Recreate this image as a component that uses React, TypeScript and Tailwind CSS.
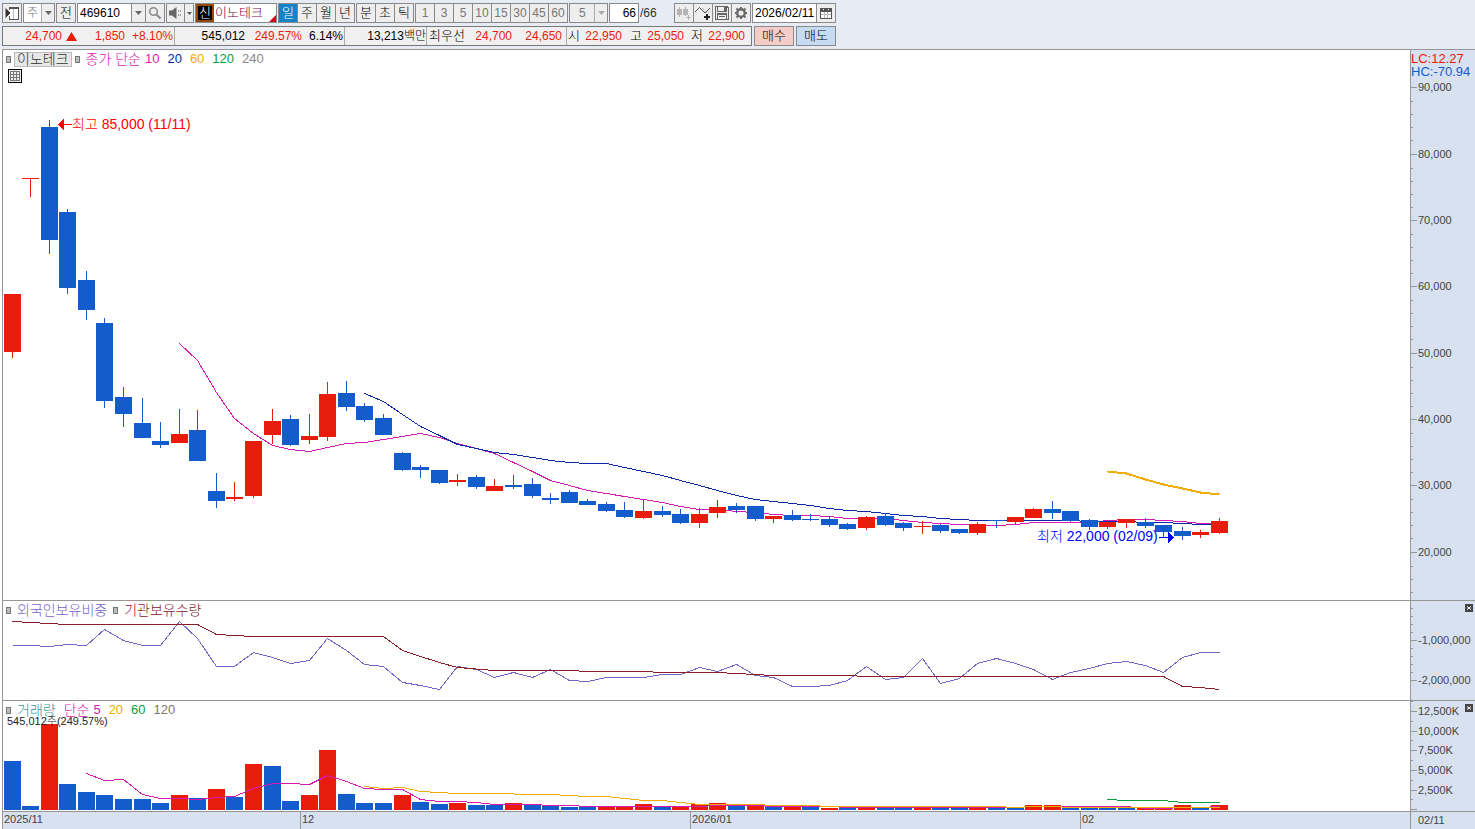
import React, { useState } from "react";

type Point = [number, number]; // [bar index, y]
type Candle = [boolean, number, number, number, number]; // [up, high, top, bottom, low]

const RED = "#e81c0a";
const BLUE = "#125ccb";

// x position of every daily bar
const barX = (i: number) => Math.floor(1 + 18.575 * i);
const centerX = (i: number) => barX(i) + 8;

// Joins a list of consecutive values, the first one is at bar "from"
const series = (from: number, values: number[]): Point[] => values.map((y, i) => [from + i, y]);

const velas: Candle[] = [
  [true, 294, 294, 352, 358],
  [true, 178, 178, 179, 197],
  [false, 120, 127, 240, 254],
  [false, 209, 212, 288, 294],
  [false, 271, 280, 310, 320],
  [false, 318, 323, 401, 408],
  [false, 387, 397, 414, 427],
  [false, 398, 423, 438, 438],
  [false, 422, 441, 445, 448],
  [true, 409, 434, 443, 443],
  [false, 410, 430, 461, 461],
  [false, 473, 491, 501, 508],
  [true, 482, 497, 499, 501],
  [true, 441, 441, 496, 498],
  [true, 409, 421, 435, 444],
  [false, 415, 419, 445, 446],
  [true, 414, 436, 440, 444],
  [true, 382, 394, 437, 441],
  [false, 381, 393, 407, 411],
  [false, 403, 406, 420, 422],
  [false, 414, 418, 435, 435],
  [false, 452, 453, 470, 471],
  [false, 465, 467, 470, 478],
  [false, 470, 470, 483, 484],
  [true, 474, 480, 482, 486],
  [false, 475, 477, 487, 489],
  [true, 479, 486, 491, 491],
  [false, 475, 485, 487, 489],
  [false, 478, 484, 496, 498],
  [false, 493, 498, 500, 504],
  [false, 490, 492, 503, 503],
  [false, 499, 501, 505, 505],
  [false, 502, 504, 511, 512],
  [false, 502, 510, 517, 518],
  [true, 500, 511, 518, 519],
  [false, 506, 511, 515, 517],
  [false, 509, 514, 523, 524],
  [true, 508, 514, 523, 528],
  [true, 500, 507, 513, 518],
  [false, 503, 506, 510, 513],
  [false, 506, 506, 519, 521],
  [true, 516, 516, 519, 523],
  [false, 510, 515, 520, 521],
  [false, 514, 519, 520, 521],
  [false, 516, 519, 525, 527],
  [false, 523, 524, 529, 530],
  [true, 516, 517, 528, 530],
  [false, 513, 516, 525, 526],
  [false, 522, 523, 528, 531],
  [true, 521, 526, 527, 534],
  [false, 524, 525, 531, 533],
  [false, 529, 529, 533, 534],
  [true, 522, 524, 533, 535],
  [false, 520, 520, 521, 528],
  [true, 517, 517, 522, 524],
  [true, 508, 509, 518, 518],
  [false, 501, 509, 513, 519],
  [false, 511, 511, 521, 522],
  [false, 519, 520, 527, 530],
  [true, 520, 522, 527, 529],
  [true, 519, 519, 523, 528],
  [false, 518, 522, 526, 528],
  [false, 525, 525, 532, 537],
  [false, 527, 531, 536, 540],
  [true, 530, 532, 535, 538],
  [true, 518, 521, 533, 534],
];

const ma10 = series(9, [
  343, 360, 392, 418, 433, 445, 449, 451, 447, 443, 442, 439, 436, 433, 437, 443, 448, 453, 462, 471, 480, 485, 490,
  493, 496, 499, 502, 506, 509, 509, 511, 512, 514, 515, 515, 516, 518, 518, 518, 520, 522, 523, 524, 525, 525, 524,
  522, 522, 522, 522, 520, 519, 519, 520, 521, 523, 523,
]);
const ma20 = series(19, [
  393, 401, 414, 426, 435, 444, 448, 452, 454, 457, 460, 462, 463, 463, 467, 471, 475, 480, 485, 490, 495, 499, 501,
  503, 505, 508, 510, 511, 513, 515, 516, 518, 519, 520, 520, 520, 520, 520, 520, 521, 521, 521, 522, 522, 523, 524,
  524,
]);
const ma60 = series(59, [471, 473, 479, 484, 488, 492, 494]);

const foreign = series(0, [
  645, 645, 646, 644, 645, 629, 640, 645, 645, 621, 638, 666, 666, 652, 657, 663, 660, 638, 650, 664, 666, 682, 685,
  689, 666, 669, 677, 672, 677, 669, 680, 681, 677, 677, 677, 674, 674, 667, 671, 664, 675, 677, 686, 686, 685, 680,
  666, 679, 677, 658, 683, 678, 663, 658, 663, 669, 679, 672, 668, 663, 661, 665, 672, 657, 652, 652,
]);
const institution: Point[] = [
  [0, 621], [3, 624], [10, 624], [11, 634], [13, 636], [20, 636], [21, 650], [22, 656], [23, 662], [24, 667],
  [26, 670], [30, 670], [31, 671], [34, 671], [35, 672], [38, 672], [41, 675], [45, 675], [46, 676], [62, 676],
  [63, 686], [64, 687], [65, 689],
];

// Top of every volume bar, the sign says if it is blue (negative) or red
const volumes = [
  -761, -806, 724, -784, -792, -795, -799, -799, -803, 795, -798, 789, -797, 764, -766, -801, 795, 750, -794, -803,
  -803, 795, -802, -804, 803, -805, -805, 803, -804, -806, -807, -807, 806, 806, 804, -807, 806, 804, 803, -805, 805,
  -807, 806, -807, 808, -808, 808, -808, -808, 808, -808, -808, 808, -808, -808, 805, 805, -808, -808, -808, -808,
  808, 808, 805, -808, 805,
];
const vol5 = series(4, [
  773, 780, 779, 794, 798, 798, 799, 797, 796, 788, 783, 783, 784, 775, 781, 788, 789, 789, 799, 801, 801, 802, 804,
  804, 804, 805, 805, 806, 806, 806, 806, 806, 806, 806, 805, 805, 805, 806, 806, 806, 806, 807, 807, 807, 807, 807,
  807, 807, 807, 807, 807, 806, 806, 806, 806, 806, 806, 808, 808, 807, 807, 806,
]);
const vol20: Point[] = [
  [19, 786], [20, 788], [21, 787], [22, 791], [24, 793], [26, 793], [28, 794], [29, 794], [31, 796], [32, 796],
  [34, 800], [35, 800], [37, 804], [40, 804], [41, 805], [43, 805], [44, 806], [53, 806], [54, 807], [55, 806],
  [56, 806], [57, 807], [65, 807],
];
const vol60 = series(59, [799, 800, 800, 800, 802, 802, 802]);

const Line: React.FC<{ points: Point[]; color: string; width?: number }> = ({ points, color, width = 1 }) => (
  <polyline
    points={points.map(([i, y]) => `${centerX(i) + 0.5},${y + 0.5}`).join(" ")}
    fill="none"
    stroke={color}
    strokeWidth={width}
  />
);

interface AxisProps {
  top: number;
  labels: [string, number][];
  minor: number[];
}

const Axis: React.FC<AxisProps> = ({ top, labels, minor }) => (
  <svg className="block h-full w-full text-[11px]" shapeRendering="crispEdges">
    <g transform={`translate(0 ${-top})`}>
      {minor.map((y) => (
        <rect key={y} x="0" y={y} width="2" height="1" fill="#969696" />
      ))}
      {labels.map(([text, y]) => (
        <g key={text}>
          <rect x="0" y={y} width="6" height="1" fill="#969696" />
          <text x="7" y={y + 4} fill="#444">
            {text}
          </text>
        </g>
      ))}
    </g>
  </svg>
);

const priceLabels: [string, number][] = [
  ["90,000", 87],
  ["80,000", 154],
  ["70,000", 220],
  ["60,000", 286],
  ["50,000", 353],
  ["40,000", 419],
  ["30,000", 485],
  ["20,000", 552],
];
const priceMinor = priceLabels.flatMap(([, y]) => [14, 27, 40, 53].map((d) => y + d)).filter((y) => y < 599);

const CloseButton: React.FC<{ label: string }> = ({ label }) => (
  <button aria-label={label} className="absolute top-[3px] right-[2px] h-2 w-2 bg-[#444]">
    <svg viewBox="0 0 8 8" className="block h-2 w-2">
      <path d="M2 2.5l4 3M6 2.5l-4 3" stroke="#fff" strokeWidth="1" />
    </svg>
  </button>
);

const Marker = () => <span className="h-[7px] w-[5px] border border-[#777] bg-[#bbb]" />;

const Arrow: React.FC<{ color?: string }> = ({ color = "#666" }) => (
  <svg viewBox="0 0 7 4" className="h-1 w-[7px]">
    <path d="M0 0h7L3.5 4z" fill={color} />
  </svg>
);

const boxed = "h-5 border border-[#8a8a8a] flex items-center justify-center";

interface DropdownProps {
  label: string;
  value: string;
  className: string;
  disabled?: boolean;
}

const Dropdown: React.FC<DropdownProps> = ({ label, value, className, disabled }) => (
  <div className={`relative ${className}`}>
    <select
      aria-label={label}
      disabled={disabled}
      defaultValue={value}
      className={`h-5 w-full appearance-none border border-[#8a8a8a] text-[#777] ${
        disabled ? "bg-[#eee] pl-[9px]" : "bg-white pl-[3px]"
      }`}
    >
      <option>{value}</option>
    </select>
    <span className="pointer-events-none absolute top-px right-px flex h-[18px] w-[13px] items-center justify-center border-l border-[#aaa] bg-[#eee]">
      <Arrow color={disabled ? "#aaa" : "#666"} />
    </span>
  </div>
);

interface ButtonGroupProps {
  items: string[];
  active?: string;
  muted?: boolean;
  onSelect?: (item: string) => void;
}

const ButtonGroup: React.FC<ButtonGroupProps> = ({ items, active, muted, onSelect }) => (
  <div className="flex pl-px">
    {items.map((item) => (
      <button
        key={item}
        onClick={() => onSelect?.(item)}
        className={`-ml-px w-5 ${boxed} ${
          item === active ? "bg-[#1583c7] text-white" : muted ? "bg-[#eee] text-[#777]" : "bg-[#eee] text-black"
        } ${muted ? "text-[12px]" : "text-[13px]"}`}
      >
        {item}
      </button>
    ))}
  </div>
);

const Toolbar = () => {
  const [period, setPeriod] = useState("일");

  return (
    <div className="flex gap-px">
      <button aria-label="메뉴" className={`w-5 bg-[#eee] ${boxed}`}>
        <svg viewBox="0 0 16 16" className="h-4 w-4" fill="none" shapeRendering="crispEdges">
          <path d="M5 2h10v13H5z" fill="#fff" />
          <path d="M5.500 5V2.500h9v12h-9V11" stroke="#555" />
          <path d="M5 2h10v2H5z" fill="#555" />
          <path d="M9.500 4v10" stroke="#bbb" />
          <path d="M2 4v8l5-4z" fill="#333" />
          <path d="M1.500 3v10" stroke="#999" />
        </svg>
      </button>
      <Dropdown label="시장" value="주" className="w-8" />
      <button className={`w-5 bg-[#eee] text-[13px] ${boxed}`}>전</button>
      <div className="flex">
        <input
          aria-label="종목코드"
          defaultValue="469610"
          className="h-5 w-[55px] border border-[#8a8a8a] bg-white pl-[2px]"
        />
        <button aria-label="종목 목록" className={`-ml-px w-[15px] bg-[#eee] ${boxed}`}>
          <Arrow />
        </button>
        <button aria-label="검색" className={`-ml-px w-5 bg-[#eee] ${boxed}`}>
          <svg viewBox="0 0 14 14" className="h-[14px] w-[14px]" fill="none" stroke="#888">
            <circle cx="5.500" cy="5.500" r="3.800" strokeWidth="1.500" />
            <path d="M8.500 8.500l4 4" strokeWidth="2" />
          </svg>
        </button>
      </div>
      <div className="flex">
        <button aria-label="소리" className={`w-[19px] bg-[#eee] ${boxed}`}>
          <svg viewBox="0 0 14 12" className="h-3 w-[14px]" fill="#666">
            <path d="M0 3.500h3L7.500 0v12L3 8.500H0z" />
            <path d="M9 3h1v2H9zM9 7h1v2H9zM11 3h1v2h-1zM11 7h1v2h-1z" fill="#999" />
          </svg>
        </button>
        <button aria-label="소리 설정" className={`-ml-px w-[10px] bg-[#eee] ${boxed}`}>
          <svg viewBox="0 0 5 3" className="h-[3px] w-[5px]">
            <path d="M0 0h5L2.500 3z" fill="#555" />
          </svg>
        </button>
      </div>
      <div className="flex h-5 w-[82px] border border-[#8a8a8a] bg-white text-[13px]">
        <span className="flex w-[18px] items-center justify-center border-2 border-[#96480a] bg-black text-white">신</span>
        <span className="relative flex flex-1 items-center pl-px text-[#7a0045]">
          이노테크
          <svg viewBox="0 0 7 7" className="absolute right-0 bottom-0 h-[7px] w-[7px]">
            <path d="M7 0v7H0z" fill="#d8001c" />
          </svg>
        </span>
      </div>
      <ButtonGroup items={["일", "주", "월", "년"]} active={period} onSelect={setPeriod} />
      <ButtonGroup items={["분", "초", "틱"]} />
      <ButtonGroup items={["1", "3", "5", "10", "15", "30", "45", "60"]} muted />
      <Dropdown label="분 간격" value="5" className="w-[39px]" disabled />
      <input
        aria-label="조회 개수"
        defaultValue="66"
        className="h-5 w-[30px] border border-[#8a8a8a] bg-white pr-[2px] text-right"
      />
      <span className="flex w-[33px] items-center text-[#333]">/66</span>
      <div className="flex pl-px">
        <button aria-label="차트 추가" className={`-ml-px w-5 bg-[#eee] ${boxed}`}>
          <svg viewBox="0 0 16 16" className="h-4 w-4" fill="#b4b4b4" shapeRendering="crispEdges">
            <path d="M1 4h5v6H1zM3 2h1v10H3zM7 4h5v6H7zM9 2h1v9H9zM10 12h5v1h-5zM12 10h1v5h-1z" />
          </svg>
        </button>
        <button aria-label="지표 추가" className={`-ml-px w-5 bg-[#eee] ${boxed}`}>
          <svg viewBox="0 0 16 16" className="h-4 w-4" fill="none">
            <path d="M0 7l4.500-4.500 5.500 5.500 5-5" stroke="#555" />
            <path d="M7 3l4 4 4 0" stroke="#999" strokeDasharray="1 1" />
            <path d="M9 12h6M12 9v6" stroke="#222" strokeWidth="2" />
          </svg>
        </button>
        <button aria-label="저장" className={`-ml-px w-5 bg-[#eee] ${boxed}`}>
          <svg viewBox="0 0 16 16" className="h-4 w-4" fill="none" shapeRendering="crispEdges">
            <path d="M1 1h12l2 2v12H1z" fill="#666" />
            <path d="M2 2h1v12H2zM13 3h1v11h-1zM4 2h6v4H4zM3 7h10v1H3zM4 10h8v4H4z" fill="#eee" />
            <path d="M5 11.500h6" stroke="#666" />
          </svg>
        </button>
        <button aria-label="설정" className={`-ml-px w-5 bg-[#eee] ${boxed}`}>
          <svg viewBox="0 0 14 14" className="h-[14px] w-[14px]" fill="none" stroke="#6a6a6a">
            <circle cx="7" cy="7" r="3.800" strokeWidth="2.400" />
            <path
              d="M7 1v2M7 11v2M1 7h2M11 7h2M2.500 2.500l1.700 1.700M9.800 9.800l1.700 1.700M2.500 11.500l1.700-1.700M9.800 4.200l1.700-1.700"
              strokeWidth="2"
            />
          </svg>
        </button>
      </div>
      <div className="flex">
        <input
          aria-label="날짜"
          defaultValue="2026/02/11"
          className="h-5 w-[65px] border border-[#8a8a8a] bg-white pl-[2px]"
        />
        <button aria-label="달력" className={`-ml-px w-5 bg-[#eee] ${boxed}`}>
          <svg viewBox="0 0 12 11" className="h-[11px] w-3" fill="none" shapeRendering="crispEdges">
            <path d="M0 0h12v11H0z" fill="#555" />
            <path d="M1 4h10v6H1z" fill="#fff" />
            <path d="M4.500 4v6M7.500 4v6M1 6.500h10" stroke="#bbb" />
            <path d="M3 1h1v1H3zM8 1h1v1H8z" fill="#fff" />
          </svg>
        </button>
      </div>
    </div>
  );
};

const Quote = () => (
  <div className="flex gap-[2px]">
    <div className="flex h-5 w-[750px] items-stretch border border-[#777] bg-[#f0f0f0] leading-[18px] whitespace-nowrap">
      <div className="flex items-center border-r border-[#aaa] pr-px text-right text-[#e81c0a]">
        <span className="w-[59px]">24,700</span>
        <svg viewBox="0 0 11 9" className="ml-1 h-[9px] w-[11px]">
          <path d="M5.500 0L11 9H0z" fill={RED} />
        </svg>
        <span className="w-12">1,850</span>
        <span className="w-12">+8.10%</span>
      </div>
      <div className="flex border-r border-[#aaa] pr-px text-right">
        <span className="w-[70px]">545,012</span>
        <span className="w-[57px] text-[#e81c0a]">249.57%</span>
        <span className="w-[41px]">6.14%</span>
      </div>
      <div className="w-[82px] border-r border-[#aaa] text-right">13,213백만</div>
      <div className="flex w-[140px] border-r border-[#aaa] text-right text-[#e81c0a]">
        <span className="w-[38px] text-[13px] text-black">최우선</span>
        <span className="w-[47px]">24,700</span>
        <span className="w-[50px]">24,650</span>
      </div>
      <div className="flex text-right text-[#e81c0a]">
        <span className="w-[13px] text-[13px] text-black">시</span>
        <span className="w-[42px]">22,950</span>
        <span className="w-5 text-[13px] text-black">고</span>
        <span className="w-[42px]">25,050</span>
        <span className="w-[19px] text-[13px] text-black">저</span>
        <span className="w-[42px]">22,900</span>
      </div>
    </div>
    <button className={`w-10 bg-[#f5cdc8] text-[13px] ${boxed}`}>매수</button>
    <button className={`w-10 bg-[#c5dcf3] text-[13px] ${boxed}`}>매도</button>
  </div>
);

const App: React.FC = () => {
  return (
    <div className="flex min-h-screen flex-col bg-white font-['Liberation_Sans','Noto_Sans_CJK_KR',sans-serif] text-[12px] font-light text-black">
      <header className="flex h-[49px] flex-col gap-[3px] bg-[#e6ebf4] pt-[3px] pl-[2px]">
        <Toolbar />
        <Quote />
      </header>

      <main className="ml-[2px] flex flex-1 flex-col border-t border-l border-[#969696]">
        {/* Price panel */}
        <section className="flex h-[551px] border-b border-[#969696]">
          <div className="relative min-w-0 flex-1">
            <svg className="block h-full w-full text-[14px]" shapeRendering="crispEdges">
              <g transform="translate(0 -50)">
                <Line points={ma10} color="#d818b0" />
                <Line points={ma20} color="#0c28a8" />
                <Line points={ma60} color="#f0ac00" width={2} />
                {velas.map(([up, high, top, bottom, low], i) => (
                  <g key={i} fill={up ? RED : BLUE}>
                    <rect x={centerX(i)} y={high} width="1" height={low - high} />
                    <rect x={barX(i)} y={top} width="17" height={bottom - top} />
                  </g>
                ))}
                <path d="M55 124.500l6-6v12z" fill="#f00" />
                <rect x="60" y="124" width="9" height="1" fill="#f00" />
                <text x="69" y="129" fill="#f00">
                  최고 85,000 (11/11)
                </text>
                <text x="1034" y="541" fill="#00f">
                  최저 22,000 (02/09)
                </text>
                <rect x="1156" y="537" width="10" height="1" fill="#00f" />
                <path d="M1171 537.500l-6-6v12z" fill="#00f" />
              </g>
            </svg>
            <div className="absolute top-0 left-[3px] flex h-[18px] items-center text-[13px]">
              <Marker />
              <span className="mx-[3px] flex h-[15px] items-center border border-[#bbb] bg-[#e8e8e8] px-[2px] text-[14px] text-[#333]">
                이노테크
              </span>
              <Marker />
              <span className="ml-[6px] text-[14px] text-[#d818b0]">종가 단순</span>
              <span className="ml-1 text-[#d818b0]">10</span>
              <span className="ml-2 text-[#0c28a8]">20</span>
              <span className="ml-2 text-[#f0ac00]">60</span>
              <span className="ml-2 text-[#0c9c3c]">120</span>
              <span className="ml-2 text-[#888]">240</span>
            </div>
            <button aria-label="표 보기" className="absolute top-[19px] left-[5px] h-[14px] w-[14px] border border-black bg-[#eee]">
              <svg viewBox="0 0 12 12" className="block h-3 w-3" fill="none" stroke="#777" shapeRendering="crispEdges">
                <path d="M1.500 1.500h9v9h-9zM4.500 1v9M7.500 1v9M1 4.500h10M1 7.500h10" />
              </svg>
            </button>
          </div>
          <div className="relative w-[65px] border-l border-[#969696] bg-[#d7e1ef]">
            <Axis top={50} labels={priceLabels} minor={priceMinor} />
            <div className="absolute top-[2px] left-0 text-[13px] leading-[13px]">
              <p className="text-[#e81c0a]">LC:12.27</p>
              <p className="text-[#125ccb]">HC:-70.94</p>
            </div>
          </div>
        </section>

        {/* Holdings panel */}
        <section className="flex h-[100px] border-b border-[#969696]">
          <div className="relative min-w-0 flex-1">
            <svg className="block h-full w-full" shapeRendering="crispEdges">
              <g transform="translate(0 -601)">
                <Line points={foreign} color="#7464c4" />
                <Line points={institution} color="#88202c" />
              </g>
            </svg>
            <div className="absolute top-0 left-[3px] flex h-[18px] items-center text-[14px]">
              <Marker />
              <span className="ml-[6px] text-[#7464c4]">외국인보유비중</span>
              <span className="mx-[6px] flex">
                <Marker />
              </span>
              <span className="text-[#88202c]">기관보유수량</span>
            </div>
          </div>
          <div className="relative w-[65px] border-l border-[#969696] bg-[#d7e1ef]">
            <Axis
              top={601}
              labels={[["-1,000,000", 640], ["-2,000,000", 680]]}
              minor={[608, 616, 624, 632, 648, 656, 664, 672]}
            />
            <CloseButton label="보유 차트 닫기" />
          </div>
        </section>

        {/* Volume panel */}
        <section className="flex h-[111px] border-b border-[#969696]">
          <div className="relative min-w-0 flex-1">
            <svg className="block h-full w-full" shapeRendering="crispEdges">
              <g transform="translate(0 -701)">
                {volumes.map((v, i) => (
                  <rect
                    key={i}
                    x={barX(i)}
                    y={Math.abs(v)}
                    width="17"
                    height={810 - Math.abs(v)}
                    fill={v > 0 ? RED : BLUE}
                  />
                ))}
                <Line points={vol5} color="#d818b0" />
                <Line points={vol20} color="#f0ac00" />
                <Line points={vol60} color="#0c9c3c" />
              </g>
            </svg>
            <div className="absolute top-0 left-[3px] flex h-[18px] items-center text-[13px]">
              <Marker />
              <span className="ml-[6px] text-[14px] text-[#389898]">거래량</span>
              <span className="ml-2 text-[14px] text-[#d818b0]">단순</span>
              <span className="ml-1 text-[#d818b0]">5</span>
              <span className="ml-2 text-[#f0ac00]">20</span>
              <span className="ml-2 text-[#0c9c3c]">60</span>
              <span className="ml-2 text-[#777]">120</span>
            </div>
            <p className="absolute top-[13px] left-1 text-[11px] leading-[14px] text-[#222]">545,012주(249.57%)</p>
          </div>
          <div className="relative w-[65px] border-l border-[#969696] bg-[#d7e1ef]">
            <Axis
              top={701}
              labels={[
                ["12,500K", 711],
                ["10,000K", 731],
                ["7,500K", 750],
                ["5,000K", 770],
                ["2,500K", 790],
                ["", 809],
              ]}
              minor={[701, 721, 740, 760, 780, 799]}
            />
            <CloseButton label="거래량 차트 닫기" />
          </div>
        </section>

        <footer className="flex min-h-[17px] flex-1 bg-[#d7e1ef] text-[11px] leading-[14px] text-[#444]">
          <div className="w-[297px] pl-px">2025/11</div>
          <div className="w-[390px] border-l border-[#969696] pl-px">12</div>
          <div className="w-[390px] border-l border-[#969696] pl-px">2026/01</div>
          <div className="flex-1 border-l border-[#969696] pl-px">02</div>
          <div className="w-[65px] border-l border-[#969696] pt-px pl-[7px]">02/11</div>
        </footer>
      </main>
    </div>
  );
};

export default App;
